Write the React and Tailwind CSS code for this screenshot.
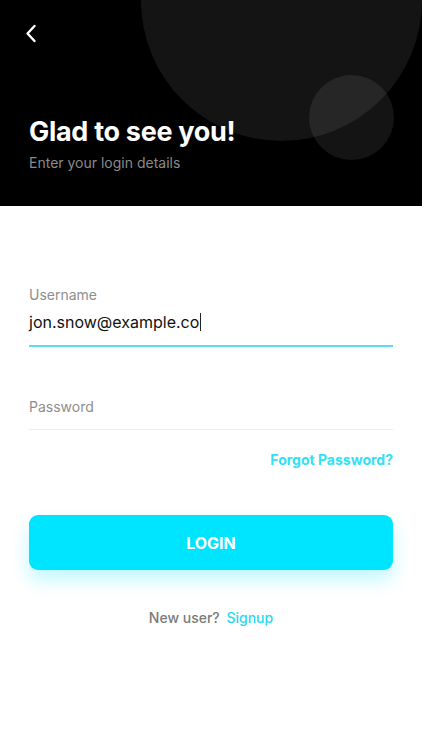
import { useState } from 'react'

export default function App() {
  const [password, setPassword] = useState('')

  return (
    <div className="min-h-[750px] w-full bg-white font-['Inter',sans-serif]">
      {/* Header */}
      <div className="relative h-[206px] overflow-hidden bg-black px-[29px]">
        <div className="absolute left-[141px] top-[-140px] h-[281px] w-[281px] rounded-full bg-[#141414]" />
        <div className="absolute left-[309px] top-[75px] h-[85px] w-[85px] rounded-full bg-white/[0.08]" />

        <div className="relative flex h-full flex-col">
          <button className="mt-[24px] -ml-[4px] flex h-[18px] w-[12px] items-center justify-center text-white">
            <svg width="12" height="19" viewBox="0 0 12 19" fill="none" stroke="currentColor" strokeWidth="2.4" strokeLinecap="round" strokeLinejoin="round">
              <path d="M9.5 2 L2.5 9.5 L9.5 17" />
            </svg>
          </button>
          <h1 className="mt-[74px] text-[27px] font-bold leading-[32px] tracking-[-0.3px] text-white">
            Glad to see you!
          </h1>
          <p className="mt-[6px] text-[14px] leading-[18px] text-[#8a8a8a]">Enter your login details</p>
        </div>
      </div>

      {/* Form */}
      <div className="px-[29px] pt-[80px]">
        {/* Username */}
        <label className="block text-[14px] leading-[18px] text-[#8e8e8e]">Username</label>
        <div className="mt-[7px] flex h-[22px] items-center text-[16px] leading-[22px] text-[#111]">
          <span>jon.snow@example.co</span>
          <span className="ml-[1px] inline-block h-[18px] w-px bg-[#222]" />
        </div>
        <div className="mt-[12px] h-[2px] bg-[#5cdcf2]" />

        {/* Password */}
        <label className="mt-[51px] block text-[14px] leading-[18px] text-[#8e8e8e]">Password</label>
        <input
          type="password"
          value={password}
          onChange={(e) => setPassword(e.target.value)}
          className="block h-[13px] w-full text-[16px] outline-none"
        />
        <div className="h-px bg-[#ececec]" />

        <div className="mt-[21px] flex justify-end">
          <a className="text-[14px] font-bold leading-[18px] text-[#33e0f5]">Forgot Password?</a>
        </div>

        <button className="mt-[46px] flex h-[55px] w-full items-center justify-center rounded-[9px] bg-[#00e5ff] text-[16px] font-bold text-white shadow-[0_10px_18px_rgba(0,229,255,0.25)]">
          LOGIN
        </button>

        <p className="mt-[37px] text-center text-[14px] font-medium text-[#7a7a7a]">
          New user? <span className="ml-[3px] text-[#26d9f2]">Signup</span>
        </p>
      </div>
    </div>
  )
}
